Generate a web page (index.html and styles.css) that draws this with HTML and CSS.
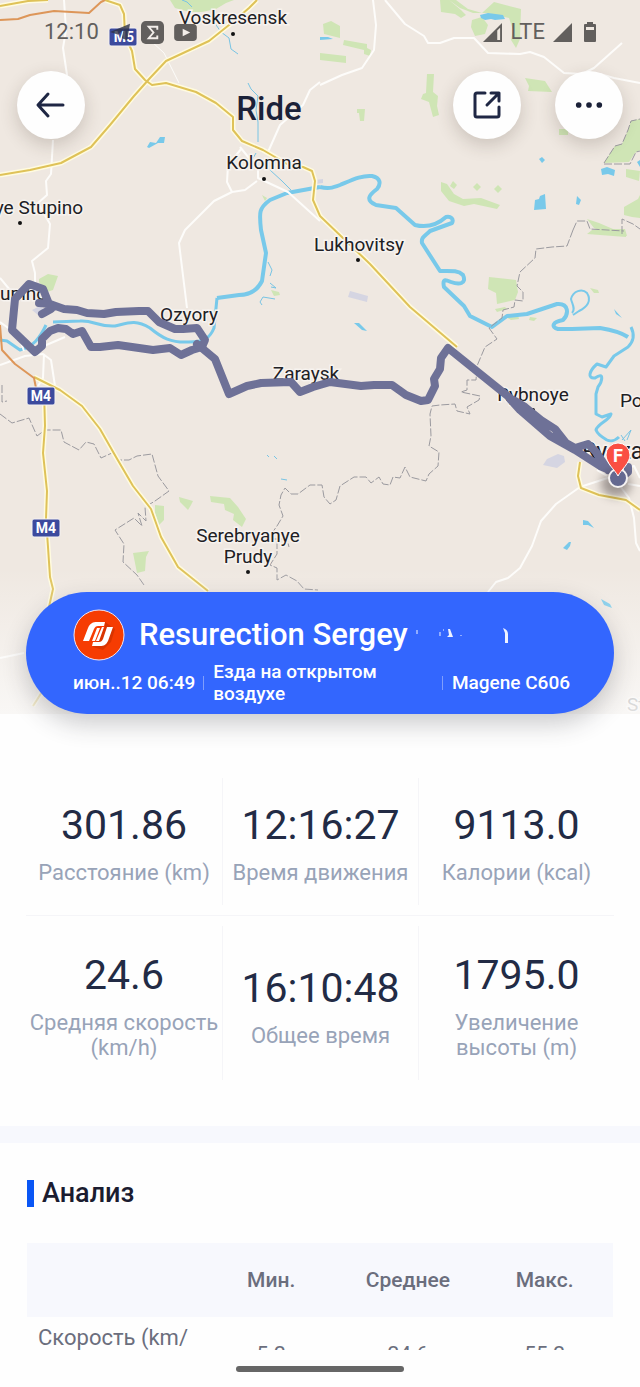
FILE: index.html
```html
<!DOCTYPE html>
<html lang="ru">
<head>
  <meta charset="UTF-8" />
  <meta name="viewport" content="width=device-width, initial-scale=1" />
  <title>Ride</title>
  <link rel="stylesheet" href="styles.css">
</head>
<body>
  <main class="screen">
    <section class="hero">
      <svg class="map" viewBox="0 0 640 714" preserveAspectRatio="xMidYMid slice" aria-label="Ride map">
        <!-- forests -->
        <g class="forest">
          <path d="M170 0l5 8 15 4 12 0 14-3 10-6 8-3z"/>
          <path d="M440 0l1 12 14 2 6 4 5-3-5-5-12-10zM456 0l12 9 14 4 12-11 27 7-1 30-4 9-5-8 2-10-4-12-22-5-14 0-13-5-11-8z"/>
          <path d="M472 20l10-3 6 8-3 9-10 2-4-9zM323 24l8-3 9 5 0 12-16-4zM344 40l23 4 0 4 4 2-1 6-6-2 0-4-21-5zM320 53l26 3 0 7-26-3z"/>
          <path d="M427 74l7 0-1 18 5 4-1 10 2 9-6 2-4-15-8-3 2-5 3-1zM357 109l8 0-1 12-4 0-1-8-2 0zM525 78l20 3 7 11-24-1 1-5zM559 129l9 0 0 6-9 0z"/>
          <path d="M604 163l11-17 7-2 6-14 3-9 9-2 0 31-5 3-6 9zM626 169l14 2-1 10-13-4zM624 207l14-8 2-4 0 23-8-1-8-2zM587 219l12 4 14 6 12 0 2 7-19-2-14-6z"/>
          <path d="M441 182l6 2 7 10 9 5 18-1 19 7-3 4-23-5-10 2-15-5-8-10zM453 181l4 4-3 4-4-3zM477 183l4 4-4 4-4-4zM498 185l4 4-4 4-4-4z"/>
          <path d="M489 277l27 3 2 12-3 8-9 2-9 2-1-11-8-4zM495 309l10-2 2 2-10 3zM506 317l12-2 1 4-8 1zM530 317l7 1-3 3-5-1z"/>
          <path d="M39 279l9-5 10 2-5 14-6 2-8-10zM587 234l5-4 14 0 20 2 0 5z"/>
          <path d="M155 505l9 1 0 14-5 5-4-12zM179 497l14 4-2 4-3 5-8-8zM210 496l20 2 8 9 8 12-4 8-9-7 1-6-9-4-1-6-13-2zM133 553l16-2-3 6-1 14-8 2-2-10zM590 288l8 2 1 3-5 0z"/>
          <path d="M262 195l5 3-2 3zM271 290l8 2 1 3-6 1z"/>
        </g>
        <g class="lilac">
          <path d="M350 291l18 5-1 6-19-5zM547 459l11-5 6 2 1 6-8 6-14-3zM32 310l8-4 5 4-7 5zM315 180l8-1 0 4-8 1z"/>
        </g>
        <!-- small lakes -->
        <g class="lake">
          <path d="M147 147l3-5 6 1 4-6 5 0-1 6-6 0-9 5zM480 15l8-2 15 2 2 4-10 1-4-1-6 1-4-2zM535 200l4-1 1-3 5-2 1 15-12 1zM577 196l4 4-2 5-3-1zM539 159l3-2 3 3-3 3zM601 169l6-2 8 3-1 6-6-2-6 1zM637 162l3-2 0 7zM354 323l5 0 8 8-5-1zM583 520l5 1 6 7-6-3-5 0zM563 548l6-6 2 0-1 4-3 4zM601 599l9 5 2 4-8-3zM320 37l8 0 5 2-13 1zM614 309l8 9-6-4z"/>
        </g>
        <!-- rivers -->
        <g class="stream">
          <path d="M182 0l5 2 5 5M214 22l7 10 8 6 2 11 7 5M248 83l3 6 7 7-2 14 2 12 0 20M256 153l-4 7M270 170l12 11 9 9M268 262l4 8-2 6M270 283l6 5-5-1M275 299l-12-2-3 5 2 3M267 455l2 2M274 456l3 3M281 479l6 1"/>
          <path d="M622 440l9-10-4 10M625 441l-4-6"/>
        </g>
        <g class="river">
          <path class="wide" d="M320 187c8 2 12 1 20-2 12-5 22-10 32-9 9 2 9 8 5 13-8 6-12 11-1 16l20 3 19 17c12 3 22 0 31-8 5-1 8 2 6 6l-22 8c-5 5-9 6-8 12l18 28c10 0 18-1 23 4 4 9-4 10-12 7-5-2-9-4-7 5l20 19 6 10 22 11 15-11 20-2 30-10c12-1 12 10 6 16-11 2-12 7-5 9l14 0 28-1c12 2 22 5 28 9"/>
          <path d="M631 327c4 8 2 15-3 20l-14 9-8 11-9-3c-8 7-10 15-2 14 10-7 7 4 3 9l-2 7 0 20 6 3 9-3c-2 7-13 9-15 16 2 5 6 7 11 10 4 2 9 0 12-3"/>
          <path class="wide" d="M320 187l-33 6-17 7c-11 8-11 12-9 30l5 23-4 28c-5 10-13 14-23 14l-22 3"/>
          <path d="M217 298l-3 30c-4 10-10 14-25 14-18 1-27-4-39-14-15-9-22-5-35-2-18 1-21-6-35-5l-27 1M0 340l7 1 13 9c13-3 20-12 26-25"/>
          <path class="arm" d="M572 313c4-4 0-9-1-14 2-8 11-11 16-6 5 8 0 14-8 18l-6 4"/>
        </g>
        <!-- minor roads -->
        <g class="road-minor">
          <path d="M64 0l2 30-3 18 4 27-2 8M53 140l-2 34-5 7 1 14-9 8 12 21-2 24-16 13 3 12 0 18"/>
          <path d="M320 82l-10 8-7 15-23 20-12 27M240 147l18 22 0 9 30 14 32 29M242 148l-14 17-1 17 5 10 13-2 12-9M232 192l-18 9-29 29-6 13 8 65"/>
          <path d="M373 0l3 25-2 25-12 18-20 7-22 10M385 0l20 24 19 12 4 7 12 0 14-5 20 0 14 15 32 1 10-2 14 5 20 16 18 1 12-6 28-25M600 74l14 4 26 5"/>
          <path class="faint" d="M150 40l14 13 15 30"/>
          <path d="M0 322l18 13 6 16M0 278l10 12M0 365l25-9 18-2 8 6 4 26M44 354l-1 24-5 8M37 349l28-12"/>
          <path d="M617 475l-37 12-24 17-15 17-9 25-12 22-12 10-12 4-8 10M617 482l12 16 5 20 2 25 4 8M597 470l10 6M628 484l12 2M620 470l14-4 6 12M0 658l24-5"/>
        </g>
        <!-- region borders -->
        <g class="border">
          <path d="M604 163l11-17 7-2 6-14 3-9 9-2M604 164l26 0 6-12 4-1M573 230l4-9 10 0 3 8 34 2M622 234l0-15 11 5 7 5M573 230l-6 16-15 1-16 2-1 9-15 14-3 14 6 6 0 9-8-1-1 7-11 3-1 8-13 10 8 11-12 8-8 19-1 14-9 0 0 10-6 2 19 4-1 4-12 7 3 7-13-3-2-7-15 1-8 1-2 8 1 22-2 10 10 6-1 14-9 8-3 7-16-4-5-10-5 11-7-1-3 8-7-1-4-7-8 6-5-6-12 0-14 9-4 14-6 4-6-7-2-12-12 0-12 9-7 0-6-6-4 7-2 10 4 11-6 10-5 7 2 6 13 0 2 8M277 541l0 13-7 11 7 3 0 12 9-5 11 6 7 8 14 1"/>
          <path d="M0 414l12 9 17-5 8 18 8-6 16 0 3 12 15 8 7-8 8 2 7 14 11-5 5 7 12 0 8-4 15-2 6 22 11 15-14 10-10 6 1 14-8-8 4 13-8-8-19 12 9 14-1 18 14 13 7 10M2 385l0 17 5-1"/>
        </g>
        <!-- highways -->
        <g class="road-case">
          <path d="M0 6l28-5 20-1M105 0l15 5 4 9 1 22 7 15 3 18 10 11 7 5 14-2 30 9 20 11 17 14 0 13 9 11 21 9 24 14 16 3 9 4 3 10-2 19 7 16 50 48 40 43 47 40"/>
          <path d="M0 175l30-5 31-7 30-16 19-22 24-29 16-18 16-17 43-20 25-20 15-13 8-8"/>
          <path d="M34 377l26 13 22 16 18 23 16 28 17 29 18 23 10 28 17 30 30 24M44 390l1 36-2 27 4 38-1 28 2 28 2 30 3 12-10 45-1 58-9 14M580 462l-2 14 3 12 18 7 27 5 14 10"/>
        </g>
        <g class="road-main">
          <path d="M0 6l28-5 20-1M105 0l15 5 4 9 1 22 7 15 3 18 10 11 7 5 14-2 30 9 20 11 17 14 0 13 9 11 21 9 24 14 16 3 9 4 3 10-2 19 7 16 50 48 40 43 47 40"/>
          <path d="M0 175l30-5 31-7 30-16 19-22 24-29 16-18 16-17 43-20 25-20 15-13 8-8"/>
          <path d="M34 377l26 13 22 16 18 23 16 28 17 29 18 23 10 28 17 30 30 24M44 390l1 36-2 27 4 38-1 28 2 28 2 30 3 12-10 45-1 58-9 14M580 462l-2 14 3 12 18 7 27 5 14 10"/>
          <path class="orange" d="M0 20l18-1 12-4 24-4 35 2 12-11 4-2M0 325l2 25 13 14 19 14 2 10"/>
        </g>
        <!-- road shields -->
        <g class="shield">
          <rect x="109" y="28" width="28" height="18" rx="2"/>
          <rect x="27" y="387" width="28" height="18" rx="2"/>
          <rect x="32" y="519" width="28" height="18" rx="2"/>
          <text x="124" y="42">M5</text>
          <text x="41" y="401">M4</text>
          <text x="46" y="533">M4</text>
        </g>
        <g class="town">
          <text x="233" y="24">Voskresensk</text>
          <text x="264" y="169">Kolomna</text>
          <text x="83" y="214" text-anchor="end">ye Stupino</text>
          <text x="359" y="251">Lukhovitsy</text>
          <text x="0" y="300" text-anchor="start">upino</text>
          <text x="189" y="321">Ozyory</text>
          <text x="306" y="380">Zaraysk</text>
          <text x="533" y="401">Rybnoye</text>
          <text x="620" y="407" text-anchor="start">Po</text>
          <text class="city" x="582" y="459" text-anchor="start">Ryazan</text>
          <text x="248" y="542">Serebryanye</text>
          <text x="248" y="563">Prudy</text>
          <text class="pale" x="627" y="711" text-anchor="start">St</text>
        </g>
        <g class="dot">
          <circle cx="233" cy="34" r="2"/>
          <circle cx="264" cy="179" r="2"/>
          <circle cx="20" cy="223" r="2"/>
          <circle cx="358" cy="260" r="2"/>
          <circle cx="533" cy="410" r="2"/>
          <circle cx="248" cy="572" r="2"/>
        </g>
        <!-- recorded track -->
        <g class="track">
          <path d="M42 314l9-5-8-20-14-5-14 15-3 31 23 22 7-6 0-7 8-8 8-3 8 1 7 5 9-3 9 16 9 0 18-2 35 5 17-2 11 7 11-5 10-3 3-7-8-12-14 1-8 0-16-7-11-11-9 0-23 1-12 2-17-1-10-3-13-1-14-5-11-1"/>
          <path d="M197 344l18 15 14 35 18-8 14-3 30-1 9 10 13-5 17-5 31 4 13-1 18 0 14 10 15 6 7-1 7-14-1-7 6-10 1-11 7-10 67 54"/>
          <path class="double" d="M510 399l10 11 30 26 25 14 25 16 14 6M515 401l10 6 16 13 14 9 11 14 9 5 13-4 8 8 6 9 6 9M622 477l6-5 0-5"/>
        </g>
        <g class="finish">
          <ellipse class="pin-shadow" cx="616" cy="484" rx="15" ry="13"/>
          <circle class="spot" cx="618" cy="478" r="9"/>
          <path class="pin" d="M618 476c-3-6-12-13-12-21a12 12 0 0 1 24 0c0 8-9 15-12 21z"/>
          <text x="618" y="462">F</text>
        </g>
      </svg>

      <div class="status">
        <div class="status-group">
          <span class="clock">12:10</span>
          <svg class="i-plane" viewBox="0 0 24 22"><path d="M1 11L23 2l-3 18-6-2 2-10-6 6z"/></svg>
          <svg class="i-sigma" viewBox="0 0 24 24"><rect width="24" height="24" rx="5"/><path d="M17 9V6H8l5 6-5 6h9v-3"/></svg>
          <svg class="i-video" viewBox="0 0 24 18"><rect width="24" height="18" rx="4"/><path d="M9 5l8 4-8 4z"/></svg>
        </div>
        <div class="status-group right">
          <svg class="i-signal" viewBox="0 0 20 20"><path fill-rule="evenodd" d="M20 0v20H0zM15 8v10h3V5z"/></svg>
          <span class="net">LTE</span>
          <svg class="i-signal" viewBox="0 0 20 20"><path d="M20 0v20H0z"/></svg>
          <svg class="i-battery" viewBox="0 0 12 20"><path fill-rule="evenodd" d="M3 0h6v2h2a1 1 0 0 1 1 1v16a1 1 0 0 1-1 1H1a1 1 0 0 1-1-1V3a1 1 0 0 1 1-1h2zM2 5v3h8V5z"/></svg>
        </div>
      </div>

      <nav class="topbar">
        <button class="round-btn" aria-label="Back">
          <svg viewBox="0 0 32 32"><path d="M28 16H4M13 5L3 16l10 11"/></svg>
        </button>
        <h1>Ride</h1>
        <div class="actions">
          <button class="round-btn" aria-label="Share">
            <svg viewBox="0 0 32 32"><path d="M14 4H6a2 2 0 0 0-2 2v20a2 2 0 0 0 2 2h20a2 2 0 0 0 2-2v-8M20 4h8v8M28 4L16 16"/></svg>
          </button>
          <button class="round-btn" aria-label="More">
            <svg class="more" viewBox="0 0 32 32"><circle cx="5" cy="16" r="3"/><circle cx="16" cy="16" r="3"/><circle cx="27" cy="16" r="3"/></svg>
          </button>
        </div>
      </nav>

      <div class="summary">
        <div class="rider">
          <svg class="avatar" viewBox="0 0 52 52">
            <circle cx="26" cy="26" r="25"/>
            <path class="logo-shade" d="M32 13l10 7-4 13-8 8-10-3 12-20z"/>
            <path class="logo" d="M10 32l5-13c2-5 5-6 9-6h8l-1 4h-6c-2 0-3 1-4 3l-5 12z"/>
            <path class="logo" d="M24 19h3l-5 13h-3zM29 18h2l-5 14h-3z"/>
            <path class="logo" d="M34 18h6l-5 14c-2 4-4 5-8 5h-8l1-4h6c2 0 3-1 4-3z"/>
          </svg>
          <span class="name">Resurection Sergey</span>
          <svg class="smudge" viewBox="0 0 98 30"><path opacity=".5" d="M4 10h2v4H4zM27 12h2v4h-2zM31 9h1v2h-1zM48 15h2v1h-2z"/><path d="M36 9h2l3 8h-6l2-2zM91 8c3 1 5 3 5 6v9h-3V13z"/></svg>
        </div>
        <div class="meta">
          <span>июн..12 06:49</span>
          <span class="mode">Езда на открытом воздухе</span>
          <span class="device">Magene C606</span>
        </div>
      </div>
    </section>

    <section class="stats">
      <div class="stat"><strong>301.86</strong><span>Расстояние (km)</span></div>
      <div class="stat"><strong>12:16:27</strong><span>Время движения</span></div>
      <div class="stat"><strong>9113.0</strong><span>Калории (kcal)</span></div>
      <hr>
      <div class="stat tall"><strong>24.6</strong><span>Средняя скорость (km/h)</span></div>
      <div class="stat tall"><strong>16:10:48</strong><span>Общее время</span></div>
      <div class="stat tall"><strong>1795.0</strong><span>Увеличение высоты (m)</span></div>
    </section>

    <section class="analysis">
      <h2>Анализ</h2>
      <table>
        <thead>
          <tr><th class="first"></th><th>Мин.</th><th>Среднее</th><th>Макс.</th></tr>
        </thead>
        <tbody>
          <tr><td class="first">Скорость (km/ h)</td><td>5.2</td><td>24.6</td><td>55.2</td></tr>
        </tbody>
      </table>
    </section>
  </main>

  <footer class="home"><div class="home-bar"></div></footer>
</body>
</html>
```
FILE: styles.css
```css
* {
  box-sizing: border-box;
}

body {
  margin: 0;
  height: 100vh;
  display: flex;
  flex-direction: column;
  background: #fefefe;
  color: #222b45;
  font-family: Roboto, "Noto Sans", sans-serif;
}

.screen {
  flex: 1;
  min-height: 0;
  overflow: hidden;
}

/* map header */
.hero {
  position: relative;
  display: flex;
  flex-direction: column;
  height: 714px;
  background: #efe8e1;
}

.map {
  position: absolute;
  inset: 0;
  width: 100%;
  height: 100%;
}

.hero::after {
  content: "";
  position: absolute;
  left: 0;
  right: 0;
  bottom: 0;
  height: 146px;
  background: linear-gradient(rgba(254, 254, 254, 0), rgba(252, 252, 252, 0.75));
}

.map path {
  stroke-linejoin: round;
}

.forest {
  fill: #cfe5b5;
}

.lilac {
  fill: #d5d5e2;
}

.lake {
  fill: #78c9ea;
}

.stream,
.river,
.road-minor,
.road-main,
.road-case,
.border,
.track {
  fill: none;
}

.stream {
  stroke: #78c4e4;
  stroke-width: 1;
}

.river {
  stroke: #78c9ea;
  stroke-width: 3;
}

.river .wide {
  stroke-width: 4;
}

.river .arm {
  stroke-width: 2;
}

.road-minor {
  stroke: #fdfcfa;
  stroke-width: 2;
}

.road-minor .faint {
  stroke-width: 1;
}

.border {
  stroke: #9b9a9f;
  stroke-width: 1;
  stroke-dasharray: 8 2;
}

.road-case {
  stroke: #fffbe0;
  stroke-width: 5;
}

.road-main {
  stroke: #dfc258;
  stroke-width: 2;
}

.road-main .orange {
  stroke: #dd9659;
  stroke-width: 2;
}

.shield rect {
  fill: #3c4a9e;
  stroke: #f5f2f2;
  stroke-width: 1;
}

.shield text {
  fill: #fff;
  font-size: 14px;
  font-weight: 700;
  text-anchor: middle;
}

.town text {
  fill: #202024;
  stroke: #f7f3ef;
  stroke-width: 3px;
  paint-order: stroke;
  font-size: 19px;
  text-anchor: middle;
}

.town text[text-anchor="start"] {
  text-anchor: start;
}

.town text[text-anchor="end"] {
  text-anchor: end;
}

.town .city {
  font-size: 23px;
}

.town .pale {
  fill: #888;
}

.dot {
  fill: #111;
}

.track {
  stroke: #6e7197;
  stroke-width: 8;
  stroke-linecap: round;
}

.pin-shadow {
  fill: rgba(40, 30, 30, 0.4);
  filter: blur(5px);
}

.spot {
  fill: #656990;
  stroke: #f5f2f2;
  stroke-width: 2;
}

.pin {
  fill: #fa4f43;
  stroke: #fff;
  stroke-width: 1;
}

.finish text {
  fill: #fff;
  font-size: 18px;
  font-weight: 700;
  text-anchor: middle;
}

/* status bar */
.status {
  position: relative;
  display: flex;
  justify-content: space-between;
  align-items: center;
  height: 64px;
  padding: 0 44px;
  color: #625f5d;
}

.status-group {
  display: flex;
  align-items: center;
  gap: 10px;
}

.status-group svg {
  fill: #625f5d;
}

.clock,
.net {
  font-size: 22px;
  line-height: 24px;
}

.i-plane {
  width: 22px;
  height: 20px;
  opacity: 0.8;
}

.status-group .i-plane {
  fill: #2e3347;
}

.i-sigma {
  width: 23px;
  height: 23px;
}

.i-sigma path {
  fill: none;
  stroke: #f3eeea;
  stroke-width: 2;
}

.i-video {
  width: 23px;
  height: 17px;
}

.i-video path {
  fill: #f3eeea;
}

.i-signal {
  width: 19px;
  height: 19px;
}

.i-battery {
  width: 12px;
  height: 20px;
}

.status .right {
  gap: 8px;
}

.right .i-battery {
  margin-left: 4px;
}

/* title row */
.topbar {
  position: relative;
  display: flex;
  align-items: center;
  padding: 7px 17px;
}

.topbar h1 {
  flex: 1;
  margin: 0;
  padding-top: 8px;
  text-align: center;
  font-size: 33px;
  line-height: 42px;
  font-weight: 500;
  color: #1b2138;
}

.actions {
  display: flex;
  gap: 34px;
}

.round-btn {
  display: flex;
  align-items: center;
  justify-content: center;
  width: 68px;
  height: 68px;
  padding: 0;
  border: 0;
  border-radius: 50%;
  background: #fefefe;
  box-shadow: 0 6px 18px rgba(60, 45, 35, 0.2);
  cursor: pointer;
}

.round-btn svg {
  width: 32px;
  height: 32px;
  fill: none;
  stroke: #1f2744;
  stroke-width: 3;
  stroke-linecap: round;
  stroke-linejoin: round;
}

.round-btn .more {
  width: 30px;
  height: 30px;
  fill: #1b2138;
  stroke: none;
}

/* blue card */
.summary {
  position: relative;
  z-index: 1;
  display: flex;
  flex-direction: column;
  height: 122px;
  margin: auto 26px 0;
  padding: 17px 44px 9px 47px;
  border-radius: 61px;
  background: #3366fe;
  box-shadow: 0 10px 24px rgba(40, 40, 50, 0.24);
  color: #fff;
}

.rider {
  display: flex;
  align-items: center;
}

.avatar {
  width: 52px;
  height: 52px;
  margin-right: 14px;
}

.avatar circle {
  fill: #f63c02;
  stroke: #f4e4ee;
  stroke-width: 1;
}

.avatar .logo-shade {
  fill: #d93400;
}

.avatar .logo {
  fill: #fff;
}

.name {
  font-size: 31px;
  line-height: 36px;
  font-weight: 500;
  white-space: nowrap;
}

.smudge {
  width: 98px;
  height: 30px;
  margin-left: 4px;
  fill: #eef2ff;
}

.meta {
  display: flex;
  align-items: center;
  font-size: 19px;
  line-height: 22px;
  font-weight: 500;
}

.mode {
  flex: 1;
  margin-left: 8px;
  padding: 0 30px 0 10px;
}

.mode,
.device {
  background: linear-gradient(#7f9efc, #7f9efc) left center / 1px 14px no-repeat;
}

.device {
  padding-left: 10px;
}

/* totals */
.stats {
  display: grid;
  grid-template-columns: repeat(3, 1fr);
  padding: 64px 26px 46px;
  border-bottom: 17px solid #f7f8fd;
}

.stats hr {
  grid-column: 1 / -1;
  width: 100%;
  height: 1px;
  margin: 10px 0;
  border: 0;
  background: #f5f5f8;
}

.stat {
  display: flex;
  flex-direction: column;
  align-items: center;
  justify-content: center;
  gap: 10px;
  height: 127px;
  padding-top: 2px;
  border-left: 1px solid #f5f5f8;
  text-align: center;
}

.stat:first-child,
hr + .stat {
  border-left: 0;
}

.stat.tall {
  height: 154px;
  padding-top: 4px;
}

.stat strong {
  font-size: 41px;
  line-height: 50px;
  font-weight: 400;
}

.stat span {
  font-size: 22px;
  line-height: 25px;
  color: #98a3b8;
}

/* table */
.analysis {
  padding: 37px 27px 0;
}

.analysis h2 {
  margin: 0 0 36px;
  padding-left: 8px;
  border-left: 7px solid #0a56f5;
  font-size: 27px;
  line-height: 27px;
  font-weight: 500;
  color: #1b1c30;
}

table {
  width: 100%;
  border-collapse: collapse;
  table-layout: fixed;
  color: #6b6e7d;
  font-size: 22px;
  line-height: 25px;
}

th {
  height: 74px;
  padding: 0;
  background: #f7f8fd;
  font-size: 21px;
  font-weight: 500;
}

.first {
  width: 30%;
}

td {
  padding: 16px 0 8px;
  font-size: 21px;
  text-align: center;
}

td.first {
  padding: 8px 11px;
  font-size: 22px;
  text-align: left;
}

/* gesture area */
.home {
  display: flex;
  justify-content: center;
  align-items: center;
  height: 37px;
}

.home-bar {
  width: 168px;
  height: 6px;
  border-radius: 3px;
  background: #666;
}
```
